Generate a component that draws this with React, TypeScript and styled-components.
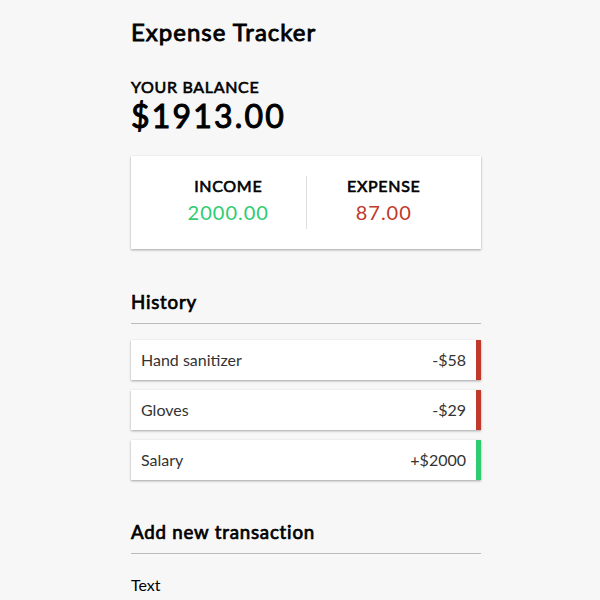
import styled, { createGlobalStyle, css } from 'styled-components';

const GlobalStyle = createGlobalStyle`
  * {
    box-sizing: border-box;
  }

  html {
    overflow-y: scroll;
  }

  ::-webkit-scrollbar {
    width: 3px;
    background: #f7f7f7;
  }

  ::-webkit-scrollbar-thumb {
    background: #c4c4c4;
    border-radius: 2px;
  }

  body {
    margin: 0;
    background-color: #f7f7f7;
    font-family: 'Lato', 'Open Sans', sans-serif;
    font-size: 16px;
    color: #000;
  }
`;

const shadow = '0 1px 3px rgba(0, 0, 0, 0.12), 0 1px 2px rgba(0, 0, 0, 0.24)';

// headings in the shot are the regular cut, thickened (faux bold look)
const heavy = (stroke: number, spacing: number) => css`
  font-weight: 400;
  letter-spacing: ${spacing}px;
  -webkit-text-stroke: ${stroke}px currentColor;
`;

type Transaction = { id: number; text: string; amount: number };

const transactions: Transaction[] = [
  { id: 1, text: 'Hand sanitizer', amount: -58 },
  { id: 2, text: 'Gloves', amount: -29 },
  { id: 3, text: 'Salary', amount: 2000 },
];

function App() {
  const amounts = transactions.map((t) => t.amount);
  const total = amounts.reduce((acc, a) => acc + a, 0).toFixed(2);
  const income = amounts.filter((a) => a > 0).reduce((acc, a) => acc + a, 0).toFixed(2);
  const expense = (amounts.filter((a) => a < 0).reduce((acc, a) => acc + a, 0) * -1).toFixed(2);

  return (
    <>
      <GlobalStyle />
      <Page>
        <Container>
          <Header>Expense Tracker</Header>

          <Label4>Your Balance</Label4>
          <Balance>${total}</Balance>

          <IncExpCard>
            <IncExpCol>
              <Label4>Income</Label4>
              <Money $type="plus">{income}</Money>
            </IncExpCol>
            <IncExpCol>
              <Label4>Expense</Label4>
              <Money $type="minus">{expense}</Money>
            </IncExpCol>
          </IncExpCard>

          <SectionTitle $top={42}>History</SectionTitle>
          <List>
            {transactions.map((t) => (
              <Item key={t.id} $type={t.amount < 0 ? 'minus' : 'plus'}>
                {t.text}
                <span>
                  {t.amount < 0 ? '-' : '+'}${Math.abs(t.amount)}
                </span>
              </Item>
            ))}
          </List>

          <SectionTitle $top={41}>Add new transaction</SectionTitle>
          <form onSubmit={(e) => e.preventDefault()}>
            <FormControl>
              <FieldLabel htmlFor="text">Text</FieldLabel>
              <TextInput id="text" type="text" placeholder="Enter text..." />
            </FormControl>
          </form>
        </Container>
      </Page>
    </>
  );
}

const Page = styled.div`
  display: flex;
  padding-left: 131px;
`;

const Container = styled.div`
  width: 350px;
  padding-top: 17px;
`;

const Header = styled.h2`
  margin: 0 0 31px;
  font-size: 24px;
  line-height: normal;
  ${heavy(0.86, 1)}
`;

const Label4 = styled.h4`
  margin: 0;
  font-size: 16px;
  text-transform: uppercase;
  line-height: normal;
  ${heavy(0.62, 0.67)}
`;

const Balance = styled.h1`
  margin: 0;
  font-size: 32px;
  line-height: normal;
  ${heavy(1.05, 2.2)}
`;

const IncExpCard = styled.div`
  display: flex;
  justify-content: space-between;
  margin: 21px 0 20px;
  padding: 20px;
  background-color: #fff;
  box-shadow: ${shadow};
`;

const IncExpCol = styled.div`
  flex: 1;
  text-align: center;

  &:first-of-type {
    border-right: 1px solid #dedede;
  }
`;

const Money = styled.p<{ $type: 'plus' | 'minus' }>`
  margin: 5px 0;
  font-size: 20px;
  letter-spacing: 1px;
  line-height: normal;
  color: ${({ $type }) => ($type === 'plus' ? '#2ecc71' : '#c0392b')};
`;

const SectionTitle = styled.h3<{ $top: number }>`
  margin: ${({ $top }) => $top}px 0 10px;
  padding-bottom: 10px;
  border-bottom: 1px solid #bbb;
  font-size: 18.72px;
  line-height: normal;
  ${heavy(0.71, 0.78)}
`;

const List = styled.ul`
  list-style-type: none;
  margin: 16px 0 40px;
  padding: 0;
`;

const Item = styled.li<{ $type: 'plus' | 'minus' }>`
  display: flex;
  justify-content: space-between;
  margin: 10px 0;
  padding: 10px;
  background-color: #fff;
  color: #333;
  line-height: 20px;
  box-shadow: ${shadow};
  border-right: 5px solid ${({ $type }) => ($type === 'plus' ? '#2ecc71' : '#c0392b')};
`;

const FormControl = styled.div``;

const FieldLabel = styled.label`
  display: inline-block;
  margin: 11px 0 10px;
  line-height: normal;
`;

const TextInput = styled.input`
  display: block;
  width: 100%;
  padding: 10px;
  border: 1px solid #dedede;
  border-radius: 2px;
  font-family: inherit;
  font-size: 16px;
`;

export default App;
